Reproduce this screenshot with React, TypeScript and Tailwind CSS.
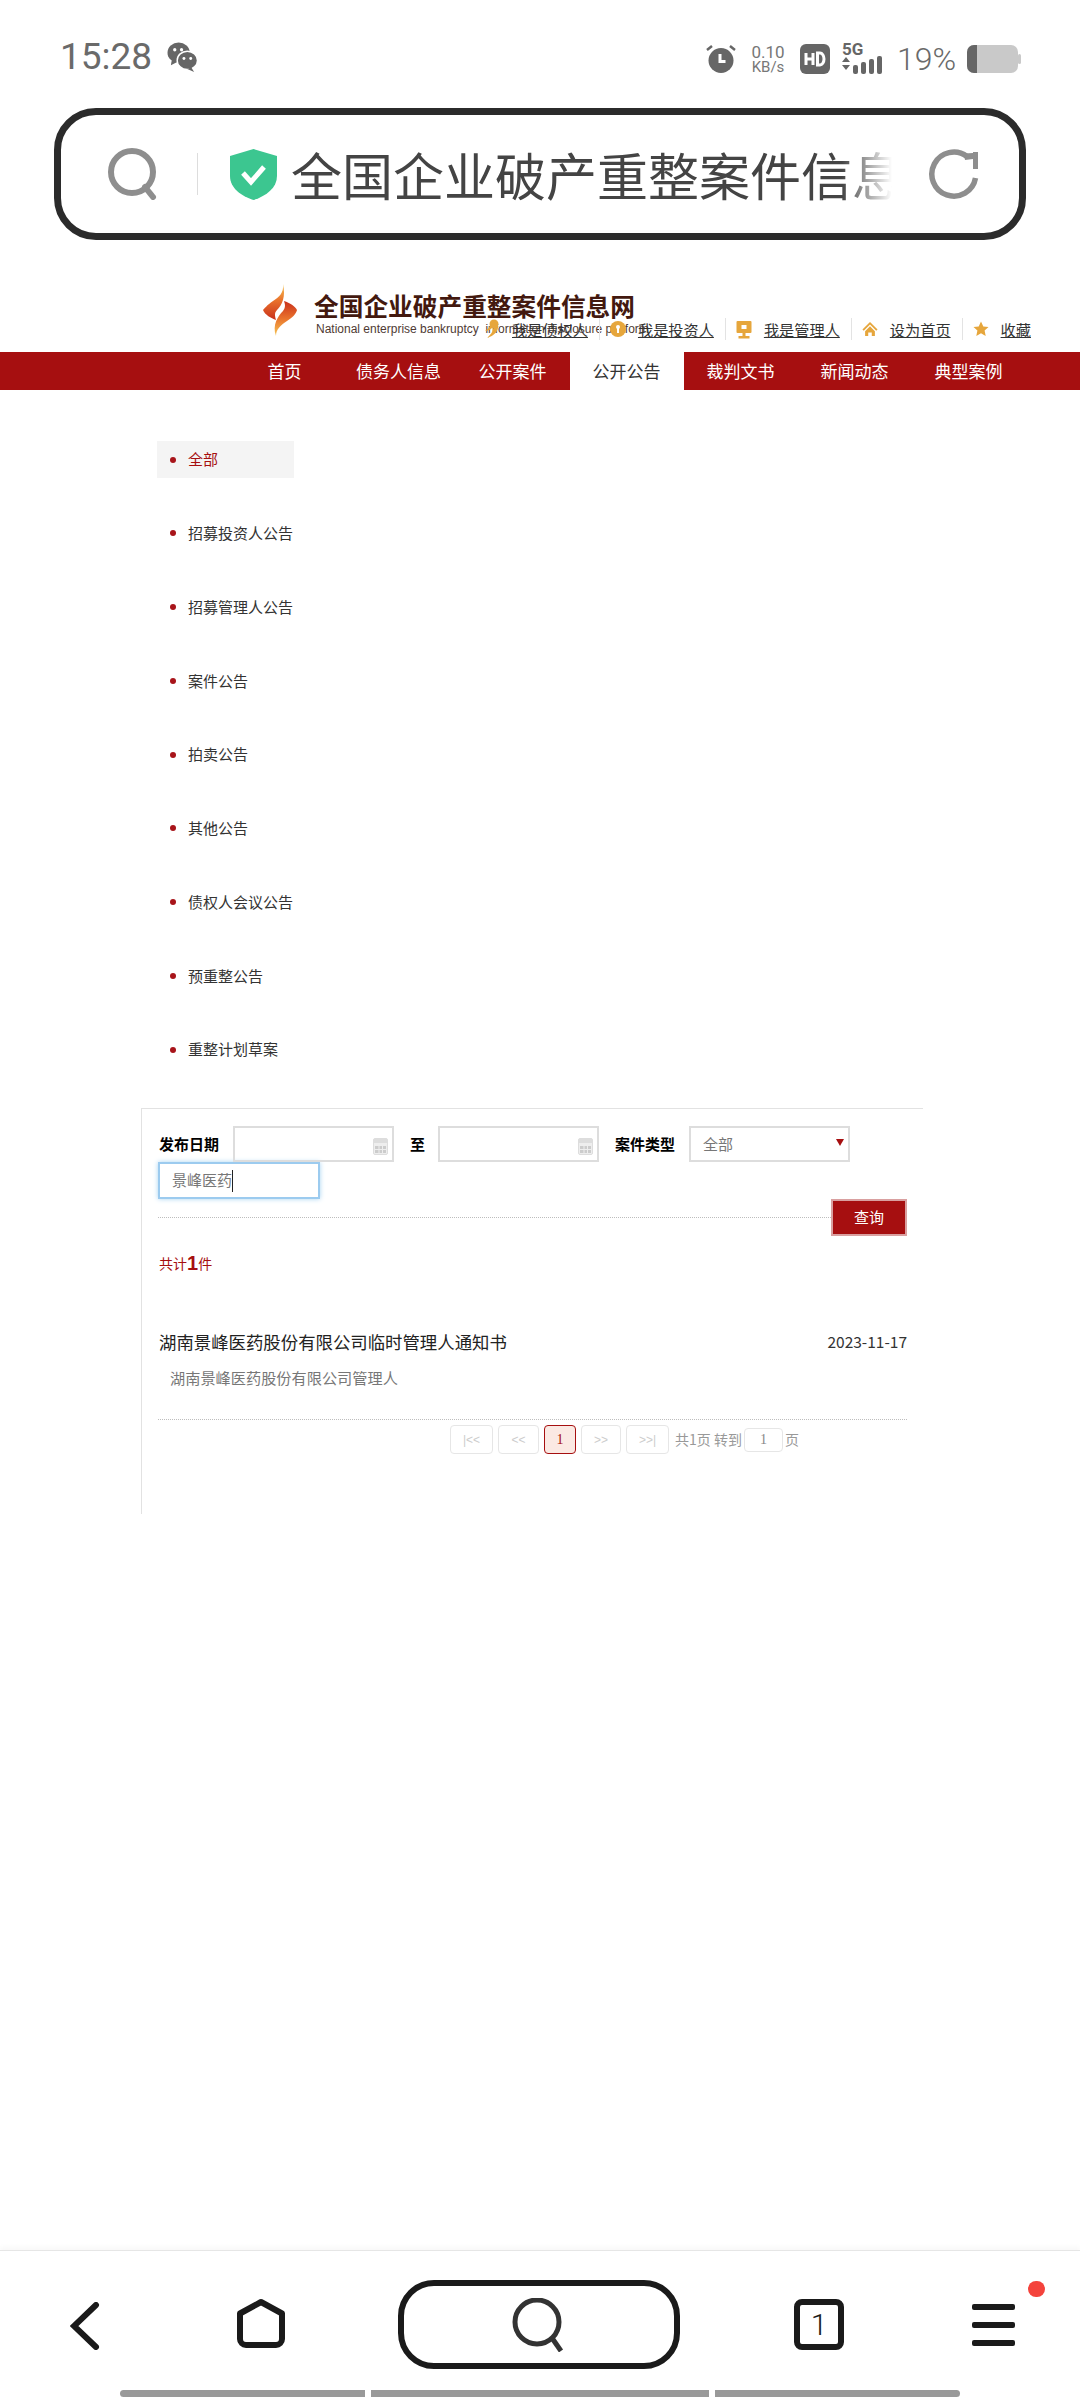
import React from "react";

const SIDE = ["全部", "招募投资人公告", "招募管理人公告", "案件公告", "拍卖公告", "其他公告", "债权人会议公告", "预重整公告", "重整计划草案"];
const NAV = ["首页", "债务人信息", "公开案件", "公开公告", "裁判文书", "新闻动态", "典型案例"];

function Cal() {
  return (
    <svg width="15" height="17" viewBox="0 0 15 17" className="absolute right-[4px] top-[10px]">
      <rect x="0.5" y="0.5" width="14" height="16" rx="1.5" fill="#eee" stroke="#ddd" />
      <rect x="1" y="1" width="13" height="4" fill="#ddd" />
      <rect x="2" y="8" width="11" height="7" fill="#ccc" />
      <path d="M2 11.5h11M6 8v7M9.500 8v7" stroke="#eee" strokeWidth="1" />
    </svg>
  );
}

function LinkIcon({ kind }: { kind: string }) {
  const c = "#e6a63c";
  if (kind === "a")
    return (
      <svg width="16" height="20" viewBox="0 0 16 20">
        <circle cx="10" cy="5" r="4.500" fill={c} />
        <path d="M14 6c1 6-4 11-11 13 3-3 6-6 6-9z" fill={c} />
        <path d="M7 5C6 8 4 10 1 12c3 0 5-1 7-3z" fill={c} />
      </svg>
    );
  if (kind === "b")
    return (
      <svg width="16" height="16" viewBox="0 0 16 16">
        <circle cx="8" cy="8" r="8" fill={c} />
        <circle cx="8" cy="6" r="2" fill="#fff" />
        <rect x="7" y="7" width="2" height="5" fill="#fff" />
      </svg>
    );
  if (kind === "c")
    return (
      <svg width="16" height="19" viewBox="0 0 16 19">
        <rect x="0.500" y="1" width="15" height="12" rx="1" fill={c} />
        <rect x="5.500" y="5" width="5" height="4" fill="#fff" />
        <rect x="6.500" y="13" width="3" height="3" fill={c} />
        <rect x="2.500" y="16" width="11" height="2.500" fill={c} />
      </svg>
    );
  if (kind === "d")
    return (
      <svg width="18" height="18" viewBox="0 0 18 18">
        <path d="M9 1L0.500 9.500 2 11l7-7 7 7 1.500-1.500z" fill={c} />
        <path d="M3.500 11.500L9 6l5.500 5.500V17H11v-4H7v4H3.500z" fill={c} />
      </svg>
    );
  return (
    <svg width="16" height="16" viewBox="0 0 16 16">
      <path d="M8 0.500l2.300 5 5.200.6-3.900 3.500 1.100 5.400L8 12.300 3.300 15l1.100-5.400L.5 6.100l5.200-.6z" fill={c} />
    </svg>
  );
}

function Sep() {
  return <span className="ml-[11px] mr-[10px] h-[22px] w-px shrink-0 bg-[#e3e3e3]" />;
}

function HeadLink({ kind, label }: { kind: string; label: string }) {
  return (
    <span className="flex items-center">
      <span className="flex w-[16px] shrink-0 items-center justify-center">
        <LinkIcon kind={kind} />
      </span>
      <span className="ml-[12px] whitespace-nowrap text-[15.200px] leading-[20px] text-[#333] underline">{label}</span>
    </span>
  );
}

function PageBtn({ label, w, active }: { label: string; w: string; active?: boolean }) {
  return (
    <span
      className={
        active
          ? "flex h-[29px] w-[32px] items-center justify-center rounded-[4px] border border-[#a60f10] bg-[#fbe9e3] text-[14px] text-[#a60f10] font-['Liberation_Serif',serif]"
          : `flex h-[29px] ${w} items-center justify-center rounded-[4px] border border-[#e6e6e6] text-[12px] text-[#cccccc] font-['Liberation_Sans',sans-serif]`
      }
    >
      {label}
    </span>
  );
}

export default function App() {
  return (
    <div className="relative flex h-[2400px] w-[1080px] flex-col overflow-hidden bg-white font-['Noto_Sans_CJK_SC','Liberation_Sans',sans-serif]">
      {/* status bar */}
      <div className="flex h-[108px] shrink-0 items-start justify-between pl-[60px] pr-[59px] pt-[36px] text-[#666]">
        <div className="flex items-center gap-[15px]">
          <span className="font-['Roboto',sans-serif] text-[37px] leading-[42px] text-[#6a6a6a]">15:28</span>
          <svg width="31" height="30" viewBox="0 0 32 31">
            <ellipse cx="12" cy="11" rx="11.500" ry="10.500" fill="#666" />
            <path d="M5 18l-1 6 6-3z" fill="#666" />
            <ellipse cx="21" cy="19" rx="10.500" ry="9.500" fill="#666" stroke="#fff" strokeWidth="1.500" />
            <path d="M25 26l3 5-7-3z" fill="#666" />
            <circle cx="8" cy="8" r="1.700" fill="#fff" />
            <circle cx="15" cy="8" r="1.700" fill="#fff" />
            <circle cx="17.500" cy="17" r="1.500" fill="#fff" />
            <circle cx="24.500" cy="17" r="1.500" fill="#fff" />
          </svg>
        </div>
        <div className="flex items-center pt-[6px]">
          <svg width="30" height="30" viewBox="0 0 30 30">
            <circle cx="15" cy="16.500" r="12.500" fill="#666" />
            <path d="M12.500 10v9h7v-3h-4v-6z" fill="#fff" />
            <path d="M1 6l5-4M29 6l-5-4" stroke="#666" strokeWidth="2.500" />
          </svg>
          <div className="ml-[14px] flex w-[36px] flex-col items-center font-['Roboto',sans-serif] text-[#777]">
            <span className="text-[17px] leading-[16px]">0.10</span>
            <span className="text-[15px] leading-[15px]">KB/s</span>
          </div>
          <svg className="ml-[14px]" width="30" height="30" viewBox="0 0 30 30">
            <rect width="30" height="30" rx="6" fill="#666" />
            <path d="M6 9v12M13 9v12M6 15h7" stroke="#fff" strokeWidth="3" />
            <path d="M17.500 9v12h2.500a4 6 0 0 0 0-12z" fill="none" stroke="#fff" strokeWidth="3" />
          </svg>
          <div className="relative ml-[12px] h-[30px] w-[45px]">
            <span className="absolute left-0 top-[-3px] font-['Roboto',sans-serif] text-[17px] font-bold leading-[17px] text-[#666]">5G</span>
            <svg className="absolute left-0 top-0" width="45" height="30" viewBox="0 0 45 30">
              <path d="M0 18l4-5 4 5zM0 21l4 5 4-5z" fill="#666" />
              <rect x="11" y="21" width="5" height="9" rx="2" fill="#666" />
              <rect x="19" y="18" width="5" height="12" rx="2" fill="#666" />
              <rect x="27" y="15" width="5" height="15" rx="2" fill="#666" />
              <rect x="35" y="12" width="5" height="18" rx="2" fill="#666" />
            </svg>
          </div>
          <span className="ml-[10px] w-[60px] font-['Roboto',sans-serif] text-[32px] font-light leading-[34px] text-[#6a6a6a]">19%</span>
          <svg className="ml-[10px]" width="54" height="28" viewBox="0 0 54 28">
            <rect x="0" y="0" width="51" height="28" rx="7" fill="#c9c9c9" />
            <path d="M7 0h3v28H7a7 7 0 0 1-7-7V7a7 7 0 0 1 7-7z" fill="#666" />
            <rect x="51" y="9" width="3" height="10" rx="1.500" fill="#c9c9c9" />
          </svg>
        </div>
      </div>

      {/* url bar */}
      <div className="ml-[54px] flex h-[132px] w-[972px] shrink-0 items-center rounded-[42px] border-[7px] border-[#2b2b2b] pl-[46px]">
        <svg width="52" height="52" viewBox="0 0 52 52">
          <circle cx="25" cy="24" r="21" fill="none" stroke="#8e8e8e" strokeWidth="6" />
          <path d="M38 39l8 10" stroke="#8e8e8e" strokeWidth="6" strokeLinecap="round" />
        </svg>
        <span className="ml-[38px] h-[42px] w-px bg-[#dddddd]" />
        <svg className="ml-[32px]" width="47" height="51" viewBox="0 0 47 51">
          <path d="M23.500 0L47 7v20c0 12-11 20-23.500 24C11 47 0 39 0 27V7z" fill="#3cc690" />
          <path d="M13 24l8 9 13-15" fill="none" stroke="#fff" strokeWidth="5" />
        </svg>
        <div className="relative ml-[14px] h-[72px] w-[601px] shrink-0 overflow-hidden whitespace-nowrap text-[51px] leading-[72px] text-[#444]">
          全国企业破产重整案件信息网
          <span className="absolute right-0 top-0 h-full w-[50px] bg-linear-to-r from-transparent to-white" />
        </div>
        <svg className="ml-[36px]" width="52" height="52" viewBox="0 0 52 52">
          <path d="M47.500 30A22 22 0 1 1 39 8.500" fill="none" stroke="#8e8e8e" strokeWidth="5.500" />
          <path d="M36 5.500L45 5V4h5v17h-5V11l-8 1z" fill="#8e8e8e" />
        </svg>
      </div>

      {/* site header */}
      <div className="relative ml-[262px] mt-[43px] flex h-[69px] shrink-0">
        <svg width="36" height="54" viewBox="0 0 36 54" className="shrink-0">
          <defs>
            <linearGradient id="fa" x1="0" y1="0" x2="0" y2="1">
              <stop offset="0" stopColor="#f6c654" />
              <stop offset="0.45" stopColor="#e9722c" />
              <stop offset="1" stopColor="#c9301c" />
            </linearGradient>
            <linearGradient id="fb" x1="0" y1="0" x2="0" y2="1">
              <stop offset="0" stopColor="#c9301c" />
              <stop offset="0.5" stopColor="#e9722c" />
              <stop offset="1" stopColor="#f6c654" />
            </linearGradient>
          </defs>
          <path d="M21 1C22 10 17 14 11 18C5 22 2 26 1 27C3 32 9 35 14 37C13 33 12 30 15 27C20 22 24 14 21 1Z" fill="url(#fa)" />
          <path d="M35 27C33 23 28 20 22 18C23 21 24 24 21 28C16 33 10 42 14 53C14 46 19 42 25 38C30 35 34 31 35 27Z" fill="url(#fb)" />
        </svg>
        <div className="ml-[16px] mt-[5px] flex flex-col">
          <span className="whitespace-nowrap text-[24.700px] font-bold leading-[34px] text-[#43190f]">全国企业破产重整案件信息网</span>
          <span className="ml-[2px] mt-[1px] whitespace-pre font-['Liberation_Sans',sans-serif] text-[12px] leading-[13px] text-[#4f3a34]">National enterprise bankruptcy  information disclosure platform</span>
        </div>
        <div className="absolute left-[222px] top-[35px] flex items-center">
          <HeadLink kind="a" label="我是债权人" />
          <Sep />
          <HeadLink kind="b" label="我是投资人" />
          <Sep />
          <HeadLink kind="c" label="我是管理人" />
          <Sep />
          <HeadLink kind="d" label="设为首页" />
          <Sep />
          <HeadLink kind="e" label="收藏" />
        </div>
      </div>

      {/* nav */}
      <div className="flex h-[38px] shrink-0 bg-[#a60f10] pl-[228px]">
        {NAV.map((n, i) => (
          <span
            key={n}
            className={`flex w-[114px] items-center justify-center pr-[1px] text-[17px] ${i === 3 ? "bg-white text-[#333]" : "text-white"}`}
          >
            {n}
          </span>
        ))}
      </div>

      {/* sidebar */}
      <div className="ml-[157px] mt-[51px] flex w-[137px] shrink-0 flex-col gap-[36.750px]">
        {SIDE.map((s, i) => (
          <div key={s} className={`flex h-[37px] items-center whitespace-nowrap pl-[13px] ${i === 0 ? "bg-[#f4f4f4] text-[#a60f10]" : "text-[#333]"}`}>
            <span className="h-[6px] w-[6px] rounded-full bg-[#a8141a]" />
            <span className="ml-[12px] text-[15px]">{s}</span>
          </div>
        ))}
      </div>

      {/* panel */}
      <div className="ml-[141px] mt-[40px] h-[406px] w-[782px] shrink-0 border-l border-t border-[#e2e2e2] pl-[16px] pt-[17px]">
        <div className="flex h-[36px] w-[749px] items-center text-[15px]">
          <span className="w-[75px] pl-px font-bold text-black">发布日期</span>
          <div className="relative h-[36px] w-[161px] border-2 border-[#ddd]"><Cal /></div>
          <span className="ml-[16px] w-[28px] font-bold text-black">至</span>
          <div className="relative h-[36px] w-[161px] border-2 border-[#ddd]"><Cal /></div>
          <span className="ml-[16px] w-[74px] font-bold text-black">案件类型</span>
          <div className="relative flex h-[36px] w-[161px] items-center border-2 border-[#ddd] pl-[12px] text-[#777]">
            全部
            <span className="absolute right-[4px] top-[11px] h-0 w-0 border-x-[4px] border-t-[7px] border-x-transparent border-t-[#a60f10]" />
          </div>
        </div>
        <div className="flex h-[37px] w-[162px] items-center border-2 border-[#9ccbef] pl-[12px] text-[15px] text-[#777] shadow-[0_0_5px_#a9d4f2]">
          景峰医药
          <span className="h-[22px] w-px bg-[#222]" />
        </div>
        <div className="flex h-[37px] w-[749px] items-center">
          <span className="flex-1 border-t border-dotted border-[#bdbdbd]" />
          <span className="flex h-[37px] w-[76px] items-center justify-center border-2 border-[#d9a0a0] bg-[#a60f10] text-[15px] text-white">查询</span>
        </div>
        <div className="mt-[12px] flex h-[30px] items-center pl-px text-[14px] text-[#a60f10]">
          共计<span className="font-['Liberation_Sans',sans-serif] text-[20px] font-bold leading-[30px]">1</span>件
        </div>
        <div className="mt-[49px] flex h-[30px] w-[749px] items-center justify-between pl-px">
          <span className="text-[17.400px] text-[#222]">湖南景峰医药股份有限公司临时管理人通知书</span>
          <span className="text-[15.500px] text-[#333]">2023-11-17</span>
        </div>
        <div className="ml-[12px] mt-[8px] h-[24px] text-[15.200px] leading-[24px] text-[#777]">湖南景峰医药股份有限公司管理人</div>
        <div className="mt-[30px] w-[749px] border-t border-dotted border-[#bdbdbd]" />
        <div className="ml-[292px] mt-[5px] flex items-start gap-[5px]">
          <PageBtn label="|<<" w="w-[43px]" />
          <PageBtn label="<<" w="w-[41px]" />
          <PageBtn label="1" w="" active />
          <PageBtn label=">>" w="w-[40px]" />
          <PageBtn label=">>|" w="w-[43px]" />
          <span className="ml-[1px] flex h-[29px] items-center whitespace-nowrap text-[14px] text-[#999]">
            共1页 转到
            <span className="mx-[2px] flex h-[24px] w-[39px] items-center justify-center rounded-[4px] border border-[#e6e6e6] font-['Liberation_Serif',serif] text-[14px] text-[#888]">1</span>
            页
          </span>
        </div>
      </div>

      {/* bottom bar */}
      <div className="mt-auto flex h-[150px] shrink-0 flex-col border-t border-[#e6e6e6] shadow-[0_-3px_5px_rgba(0,0,0,0.03)]">
        <div className="relative flex h-[139px] items-start pt-[29px]">
          <svg className="ml-[70px] mt-[22px] shrink-0" width="30" height="48" viewBox="0 0 30 48">
            <path d="M26 3L4 24l22 21" fill="none" stroke="#1a1a1a" strokeWidth="6" strokeLinecap="round" />
          </svg>
          <svg className="ml-[137px] mt-[19px] shrink-0" width="48" height="50" viewBox="0 0 48 50">
            <path d="M24 3L3 14.500V40a6 6 0 0 0 6 6h30a6 6 0 0 0 6-6V14.500z" fill="none" stroke="#1a1a1a" strokeWidth="6" strokeLinejoin="round" />
          </svg>
          <div className="ml-[113px] flex h-[89px] w-[282px] shrink-0 items-center justify-center rounded-[36px] border-[6px] border-[#1a1a1a]">
            <svg width="56" height="54" viewBox="0 0 56 54">
              <circle cx="26" cy="24" r="22" fill="none" stroke="#333" strokeWidth="5" />
              <path d="M41 40l9 13" stroke="#333" strokeWidth="5" />
            </svg>
          </div>
          <div className="ml-[114px] mt-[19px] flex h-[51px] w-[50px] shrink-0 items-center justify-center rounded-[8px] border-[6px] border-[#1a1a1a] font-['Roboto',sans-serif] text-[30px] font-light leading-none text-[#1a1a1a]">1</div>
          <div className="ml-[128px] mt-[24px] flex w-[43px] shrink-0 flex-col gap-[12px]">
            <span className="h-[6px] rounded-[2px] bg-[#1a1a1a]" />
            <span className="h-[6px] rounded-[2px] bg-[#1a1a1a]" />
            <span className="h-[6px] rounded-[2px] bg-[#1a1a1a]" />
          </div>
          <span className="absolute left-[1028px] top-[30px] h-[16px] w-[17px] rounded-full bg-[#f4433c]" />
        </div>
        <div className="flex h-[7px] gap-[6px] pl-[120px]">
          <span className="w-[245px] rounded-l-full bg-[#999]" />
          <span className="w-[338px] bg-[#999]" />
          <span className="w-[245px] rounded-r-full bg-[#999]" />
        </div>
      </div>
    </div>
  );
}
